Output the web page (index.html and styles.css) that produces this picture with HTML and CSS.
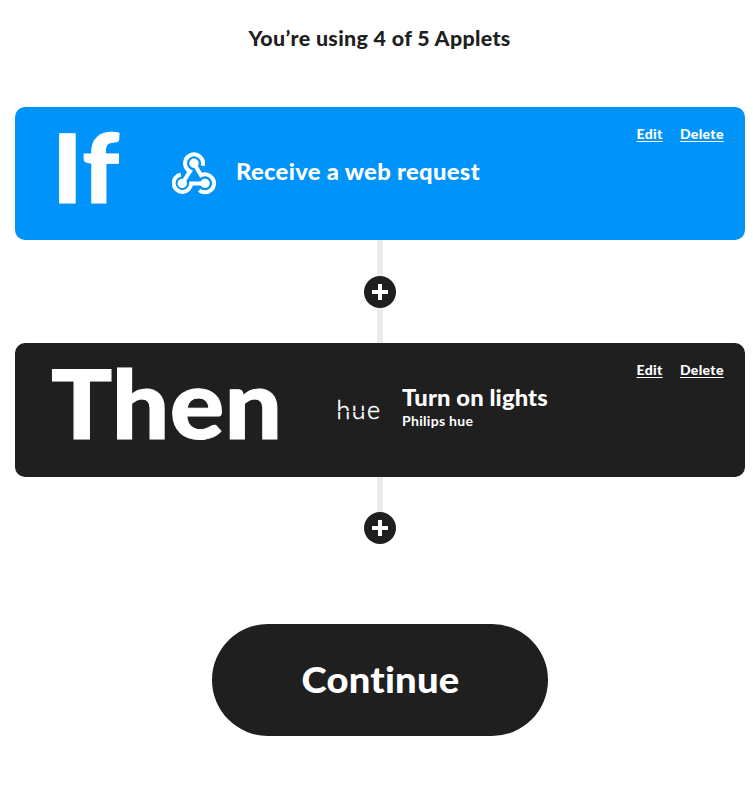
FILE: index.html
```html
<!DOCTYPE html>
<html lang="en">
<head>
<meta charset="utf-8">
<title>Create Applet</title>
<link rel="stylesheet" href="styles.css">
</head>
<body>
<main class="page">
  <h1 class="usage">You’re using 4 of 5 Applets</h1>
  <section class="card card-if">
    <h2 class="keyword keyword-if">If</h2>
    <svg class="service webhook" viewBox="12 12 44 43" fill="none" stroke="#fff" stroke-width="4">
      <path d="M42.7 25.8A9 9 0 1 0 30 31.4L22.3 43.3"/>
      <path d="M34 23.3L41 35.3A9 9 0 1 1 39.2 50.2"/>
      <path d="M20.8 34.5A8.8 8.8 0 1 0 31.2 43.5H45"/>
      <g fill="#fff" stroke="none"><circle cx="34" cy="23.3" r="4.7"/><circle cx="22.3" cy="43.4" r="4.7"/><circle cx="45" cy="43.4" r="4.7"/></g>
    </svg>
    <div class="detail"><p class="name name-if">Receive a web request</p></div>
    <nav class="actions"><a class="edit">Edit</a><a class="delete">Delete</a></nav>
  </section>
  <div class="connector"><span class="add"></span></div>
  <section class="card card-then">
    <h2 class="keyword keyword-then">Then</h2>
    <svg class="service hue" viewBox="0 0 46 34">
      <text class="hue-text" x="-.5" y="24.5">hue</text>
      <path d="M0 17.5H28" stroke="#1f1f1f" stroke-width="1"/>
    </svg>
    <div class="detail"><p class="name name-then">Turn on lights</p><p class="owner">Philips hue</p></div>
    <nav class="actions"><a class="edit">Edit</a><a class="delete">Delete</a></nav>
  </section>
  <div class="connector connector-end"><span class="add"></span></div>
  <button class="continue"><span class="continue-label">Continue</span></button>
</main>
</body>
</html>
```
FILE: styles.css
```css
* { box-sizing: border-box; }
body { margin: 0; background: #fff; color: #1f1f1f; font-family: Lato, "Open Sans", sans-serif; font-weight: 900; font-variant-ligatures: none; }
h1, h2, p { margin: 0; }
.page { width: 730px; margin-left: 15px; display: flex; flex-direction: column; align-items: center; }
.usage { height: 107px; padding-top: 26px; font-size: 20px; line-height: 24px; font-weight: 900; letter-spacing: .3px; transform: scaleX(1.07); }
.card { position: relative; width: 100%; display: flex; align-items: flex-start; border-radius: 10px; color: #fff; white-space: nowrap; }
.card-if { height: 133px; background: #0094fb; padding-left: 37px; }
.card-then { height: 134px; background: #1f1f1f; padding-left: 36px; }
.keyword { font-size: 95px; line-height: 96px; font-weight: 900; margin-top: 11px; -webkit-text-stroke: 1px #fff; transform: scaleX(1.07); transform-origin: left; }
.keyword-if { width: 120px; letter-spacing: 1px; }
.keyword-then { width: 286px; letter-spacing: .3px; }
.service { flex: none; }
.webhook { width: 44px; height: 43px; margin-top: 45px; }
.hue { width: 46px; height: 34px; margin-top: 51px; }
.hue-text { font: 300 25px Lato, sans-serif; letter-spacing: 1.5px; fill: #fff; stroke: #fff; stroke-width: .5px; }
.detail { margin-left: 20px; }
.name { font-size: 22px; line-height: 28px; letter-spacing: .3px; transform: scaleX(1.08); transform-origin: left; }
.name-if { margin-top: 51px; }
.name-then { margin-top: 41px; margin-left: -1px; letter-spacing: .1px; }
.owner { margin: -1px 0 0 -1px; font-size: 14px; line-height: 20px; font-weight: 700; letter-spacing: .3px; }
.actions { position: absolute; right: 21px; top: 18px; display: flex; gap: 16px; font-size: 13px; line-height: 18px; letter-spacing: .3px; transform: scaleX(1.08); transform-origin: right; }
.actions a { text-decoration: underline; text-decoration-thickness: 1px; text-underline-offset: 2px; }
.connector { width: 6px; height: 103px; background: #ebebeb; display: flex; justify-content: center; align-items: center; }
.connector-end { height: 51px; align-items: flex-end; margin-bottom: 96px; }
.connector-end .add { margin-bottom: -16px; }
.add { position: relative; flex: none; width: 32px; height: 32px; border-radius: 50%; background: #1f1f1f; }
.add::before, .add::after { content: ""; position: absolute; background: #fff; }
.add::before { left: 8px; top: 14px; width: 16px; height: 4px; }
.add::after { left: 14px; top: 8px; width: 4px; height: 16px; }
.continue { width: 336px; height: 112px; padding: 0 0 3px; border: 0; border-radius: 56px; background: #1f1f1f; color: #fff; font: 900 36px Lato, sans-serif; letter-spacing: .2px; }
.continue-label { display: inline-block; transform: scaleX(1.06); }
```
